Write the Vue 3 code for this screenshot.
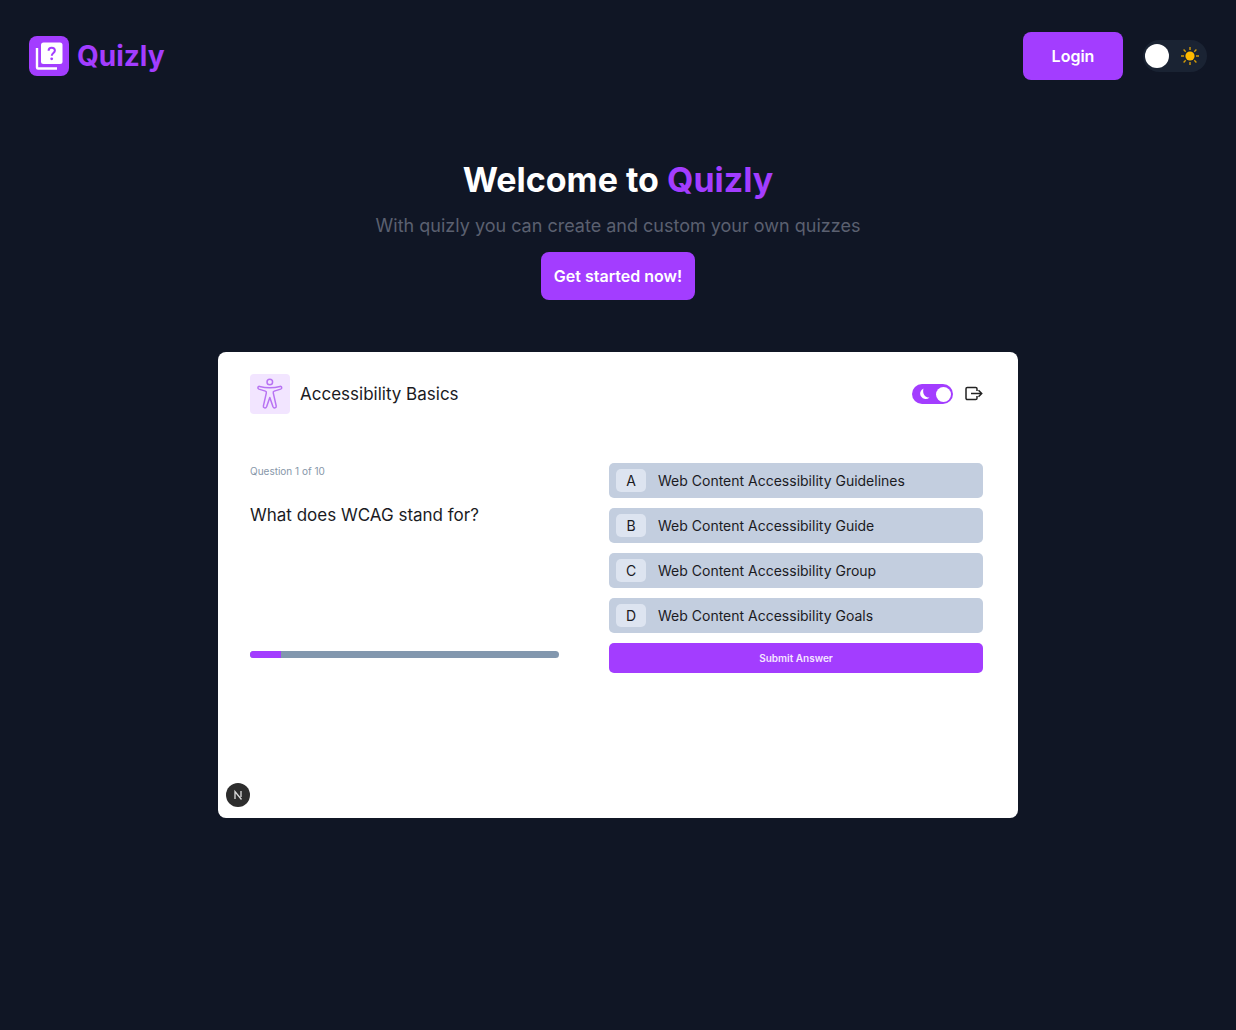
<script setup>
import { ref } from 'vue'

const lightTheme = ref(false)
const previewDark = ref(true)
const selected = ref('')
const progress = 10

const options = [
  { key: 'A', text: 'Web Content Accessibility Guidelines' },
  { key: 'B', text: 'Web Content Accessibility Guide' },
  { key: 'C', text: 'Web Content Accessibility Group' },
  { key: 'D', text: 'Web Content Accessibility Goals' },
]
</script>

<template>
  <div class="page">
    <header class="topbar">
      <a href="#" class="brand">
        <svg class="brand-icon" viewBox="0 0 40 40" aria-hidden="true">
          <rect width="40" height="40" rx="8" fill="#a33dff" />
          <path d="M8 12v19.500a1 1 0 0 0 1 1H28" fill="none" stroke="#fff" stroke-width="2.400" />
          <rect x="12" y="6.500" width="21.500" height="21.500" rx="2.500" fill="#fff" />
          <path d="M19.600 14.800c0-1.900 1.300-3 3.100-3s3.200 1.100 3.200 2.800c0 2.400-3.100 2.600-3.100 5.200" fill="none" stroke="#a33dff" stroke-width="2" />
          <circle cx="22.700" cy="22.800" r="1.400" fill="#a33dff" />
        </svg>
        <span>Quizly</span>
      </a>
      <div class="actions">
        <button type="button" class="btn login">Login</button>
        <label class="theme">
          <input v-model="lightTheme" type="checkbox" aria-label="Light theme" />
          <span class="knob"></span>
          <svg class="sun" viewBox="0 0 20 20" aria-hidden="true">
            <circle cx="10" cy="10" r="4.600" fill="#ffba00" />
            <path d="M10 1v3M10 16v3M1 10h3M16 10h3M3.600 3.600l2.100 2.100M14.300 14.300l2.100 2.100M3.600 16.400l2.100-2.100M14.300 5.700l2.100-2.100" stroke="#d39b08" stroke-width="1.400" />
          </svg>
        </label>
      </div>
    </header>

    <main class="hero">
      <h1>Welcome to <span>Quizly</span></h1>
      <p class="tagline">With quizly you can create and custom your own quizzes</p>
      <button type="button" class="btn start">Get started now!</button>

      <section class="preview" aria-label="Quiz preview">
        <div class="quiz-head">
          <svg class="quiz-icon" viewBox="0 0 40 40" aria-hidden="true">
            <rect width="40" height="40" rx="4" fill="#f2e5ff" />
            <g fill="none" stroke="#b873f3" stroke-width="1.500" stroke-linejoin="round">
              <circle cx="19.800" cy="8" r="2.800" />
              <path d="M9.500 12.400c-1.700-.4-2.300 2.100-.6 2.700l6.500 2c1 .3 1.200 1 .9 2.100l-2.900 12.700c-.5 2 2.300 2.900 3.200.9l3.200-9.300 3.200 9.300c.9 2 3.700 1.100 3.200-.9l-2.900-12.700c-.3-1.100-.1-1.800.9-2.100l6.500-2c1.700-.6 1.100-3.100-.6-2.700-7.800 1.900-12.800 1.900-20.600 0z" />
            </g>
          </svg>
          <h2>Accessibility Basics</h2>
          <label class="mini">
            <input v-model="previewDark" type="checkbox" aria-label="Dark mode" />
            <svg viewBox="0 0 12 12" aria-hidden="true">
              <path d="M5.500.5A5.500 5.500 0 1 0 11.500 9.500C7.500 10 4 6 5.500.5z" fill="#fff" />
            </svg>
            <span></span>
          </label>
          <button type="button" class="exit" aria-label="Exit quiz">
            <svg viewBox="0 0 18 16" fill="none" stroke="#222" stroke-width="1.500" aria-hidden="true">
              <path d="M12 5V2.800A1.300 1.300 0 0 0 10.700 1.500H2.300A1.300 1.300 0 0 0 1 2.800v9.400a1.300 1.300 0 0 0 1.300 1.300h8.400a1.300 1.300 0 0 0 1.300-1.300V10M6 7.500h10.500M13.500 4.300l3.200 3.200-3.200 3.200" />
            </svg>
          </button>
        </div>

        <div class="quiz-body">
          <div class="question">
            <p class="count">Question 1 of 10</p>
            <h3>What does WCAG stand for?</h3>
            <div class="bar" role="progressbar" aria-label="Quiz progress" :aria-valuenow="progress" aria-valuemin="0" aria-valuemax="100">
              <div class="fill" :style="{ width: progress + '%' }"></div>
            </div>
          </div>
          <div class="answers">
            <button v-for="o in options" :key="o.key" type="button" class="option" :aria-pressed="selected === o.key" @click="selected = o.key">
              <span class="letter">{{ o.key }}</span>
              <span>{{ o.text }}</span>
            </button>
            <button type="button" class="submit">Submit Answer</button>
          </div>
        </div>

        <div class="badge">
          <svg viewBox="0 0 24 24" aria-hidden="true">
            <circle cx="12" cy="12" r="12" fill="#2d2d2d" />
            <path d="M9 16V8.500l6.500 8M15 8v6" fill="none" stroke="#ddd" stroke-width="1.300" />
          </svg>
        </div>
      </section>
    </main>
  </div>
</template>

<style>
body {
  margin: 0;
  background: #101625;
}
</style>

<style scoped>
.page {
  min-height: 100vh;
  background: #101625;
  color: #fff;
  font-family: Inter, sans-serif;
}
h1, h2, h3, p {
  margin: 0;
}
button {
  font-family: inherit;
  border: 0;
  padding: 0;
  cursor: pointer;
}
svg {
  display: block;
}
.topbar {
  display: flex;
  align-items: center;
  justify-content: space-between;
  padding: 32px 29px;
}
.brand {
  display: flex;
  align-items: center;
  gap: 8px;
  color: #a33dff;
  font-size: 28px;
  line-height: 40px;
  font-weight: 700;
  text-decoration: none;
}
.brand-icon {
  width: 40px;
  height: 40px;
}
.actions {
  display: flex;
  align-items: center;
  gap: 20px;
}
.btn {
  height: 48px;
  border-radius: 8px;
  background: #a33dff;
  color: #fff;
  font-size: 16px;
  font-weight: 600;
}
.login {
  width: 100px;
}
.theme {
  display: flex;
  align-items: center;
  justify-content: space-between;
  box-sizing: border-box;
  width: 64px;
  height: 32px;
  padding: 0 7px 0 2px;
  border-radius: 16px;
  background: #1a2333;
}
.theme input,
.mini input {
  position: absolute;
  opacity: 0;
}
.knob {
  width: 24px;
  height: 24px;
  border-radius: 50%;
  background: #fff;
}
.sun {
  width: 20px;
  height: 20px;
}
.hero {
  display: flex;
  flex-direction: column;
  align-items: center;
  padding: 48px 24px;
}
h1 {
  font-size: 34px;
  line-height: 40px;
  font-weight: 700;
}
h1 span {
  color: #a33dff;
}
.tagline {
  margin-top: 12px;
  color: #5b6070;
  font-size: 18px;
  line-height: 28px;
}
.start {
  margin-top: 12px;
  padding: 0 13px;
}
.preview {
  position: relative;
  box-sizing: border-box;
  width: 100%;
  max-width: 800px;
  margin-top: 52px;
  padding: 22px 35px 145px 32px;
  border-radius: 8px;
  background: #fff;
  color: #1b1b1f;
}
.quiz-head {
  display: flex;
  align-items: center;
}
.quiz-icon {
  width: 40px;
  height: 40px;
}
h2 {
  flex: 1;
  margin-left: 10px;
  font-size: 17px;
  line-height: 24px;
  font-weight: 400;
}
.mini {
  display: flex;
  align-items: center;
  justify-content: space-between;
  box-sizing: border-box;
  width: 41px;
  height: 20px;
  padding: 0 2px 0 6px;
  border-radius: 10px;
  background: #a33dff;
}
.mini svg {
  width: 12px;
  height: 12px;
}
.mini span {
  width: 15px;
  height: 15px;
  border-radius: 50%;
  background: #fff;
}
.exit {
  margin-left: 12px;
  background: none;
}
.exit svg {
  width: 18px;
  height: 16px;
}
.quiz-body {
  display: grid;
  grid-template-columns: 309fr 374fr;
  gap: 50px;
  margin-top: 49px;
}
.question {
  display: flex;
  flex-direction: column;
  padding-bottom: 15px;
}
.count {
  color: #8797a9;
  font-size: 10px;
  line-height: 16px;
}
h3 {
  margin-top: 24px;
  font-size: 17px;
  line-height: 24px;
  font-weight: 400;
}
.bar {
  height: 7px;
  margin-top: auto;
  border-radius: 4px;
  background: #8297ae;
  overflow: hidden;
}
.fill {
  height: 100%;
  background: #a33dff;
}
.answers {
  display: flex;
  flex-direction: column;
  gap: 10px;
}
.option {
  display: flex;
  align-items: center;
  gap: 12px;
  height: 35px;
  padding: 0 7px;
  border-radius: 5px;
  background: #c3cedf;
  color: #1b1b1f;
  font-size: 14px;
}
.letter {
  width: 30px;
  border-radius: 5px;
  background: #dde4f0;
  line-height: 23px;
  text-align: center;
}
.submit {
  height: 30px;
  border-radius: 5px;
  background: #a33dff;
  color: #f5e6ff;
  font-size: 10px;
  font-weight: 600;
}
.badge {
  position: absolute;
  left: 8px;
  bottom: 11px;
  width: 24px;
}
</style>
